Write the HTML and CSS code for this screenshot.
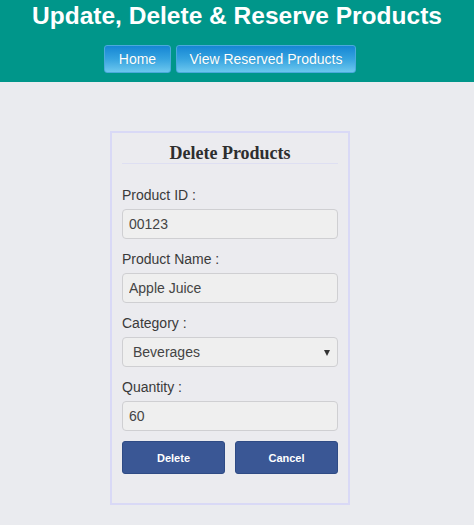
FILE: index.html
```html
<!DOCTYPE html>
<html>
<head>
<meta charset="utf-8">
<title>Delete Products</title>
<link rel="stylesheet" href="styles.css">
</head>
<body>
<header class="top">
  <h1 class="title">Update, Delete &amp; Reserve Products</h1>
  <nav class="nav">
    <a class="nav-btn nav-home" href="#">Home</a>
    <a class="nav-btn nav-view" href="#">View Reserved Products</a>
  </nav>
</header>
<main class="main">
  <form class="card">
    <h2 class="card-title">Delete Products</h2>
    <div class="field">
      <label class="label">Product ID :</label>
      <input class="input" type="text" value="00123">
    </div>
    <div class="field">
      <label class="label">Product Name :</label>
      <input class="input" type="text" value="Apple Juice">
    </div>
    <div class="field">
      <label class="label">Category :</label>
      <div class="select-wrap">
        <select class="input select">
          <option>Beverages</option>
        </select>
      </div>
    </div>
    <div class="field">
      <label class="label">Quantity :</label>
      <input class="input" type="text" value="60">
    </div>
    <div class="actions">
      <button class="btn" type="button">Delete</button>
      <button class="btn" type="button">Cancel</button>
    </div>
  </form>
</main>
</body>
</html>
```
FILE: styles.css
```css
html, body {
  margin: 0;
  padding: 0;
}
body {
  background: #eaebef;
  font-family: "Liberation Sans", Arial, sans-serif;
  color: #333;
  height: 525px;
  overflow: hidden;
}
.top {
  background: #00968a;
  height: 82px;
  box-sizing: border-box;
  padding-top: 2px;
}
.title {
  margin: 0;
  text-align: center;
  color: #fff;
  font-size: 24.5px;
  line-height: 28px;
  font-weight: bold;
}
.nav {
  display: flex;
  justify-content: center;
  gap: 5px;
  padding-right: 14px;
  margin-top: 15px;
}
.nav-btn {
  display: flex;
  align-items: center;
  justify-content: center;
  height: 28px;
  box-sizing: border-box;
  border: 1px solid #4aa9dc;
  border-radius: 3px;
  background: linear-gradient(to bottom, #1586d4 0%, #36a3e0 50%, #6cc7ee 100%);
  color: #fff;
  font-size: 14px;
  text-decoration: none;
  text-shadow: 0 0 1px rgba(0,0,0,0.15);
}
.nav-home { width: 67px; }
.nav-view { width: 180px; }
.main {
  display: flex;
  justify-content: center;
  padding-right: 14px;
  padding-top: 49px;
}
.card {
  width: 240px;
  box-sizing: border-box;
  border: 2px solid #d9d9f6;
  padding: 0 10px 29px 10px;
  background: #ebebef;
}
.card-title {
  margin: 0;
  padding-top: 10px;
  font-family: "Liberation Serif", "Times New Roman", serif;
  font-size: 18px;
  line-height: 20px;
  font-weight: bold;
  text-align: center;
  color: #2e2e2e;
  border-bottom: 1px solid #dedff2;
}
.field {
  display: flex;
  flex-direction: column;
  margin-bottom: 10px;
}
.field:first-of-type {
  margin-top: 21px;
}
.label {
  font-size: 14px;
  line-height: 20px;
  color: #3a3a3a;
  margin-bottom: 4px;
}
.input {
  height: 30px;
  box-sizing: border-box;
  border: 1px solid #cfcfd2;
  border-radius: 4px;
  background: #efefef;
  font-family: "Liberation Sans", Arial, sans-serif;
  font-size: 14px;
  color: #444;
  padding: 0 6px;
  width: 100%;
}
.select-wrap {
  position: relative;
}
.select {
  appearance: none;
  -webkit-appearance: none;
  padding-left: 10px;
}
.select-wrap::after {
  content: "";
  position: absolute;
  right: 8px;
  top: 13px;
  border-left: 3.5px solid transparent;
  border-right: 3.5px solid transparent;
  border-top: 6px solid #333;
  pointer-events: none;
}
.actions {
  display: flex;
  justify-content: space-between;
  margin-top: 1px;
}
.btn {
  width: 103px;
  height: 33px;
  border: 1px solid #2f4b85;
  border-radius: 3px;
  background: #3a5795;
  color: #fff;
  font-family: "Liberation Sans", Arial, sans-serif;
  font-size: 11px;
  font-weight: bold;
  padding: 0;
}
```
